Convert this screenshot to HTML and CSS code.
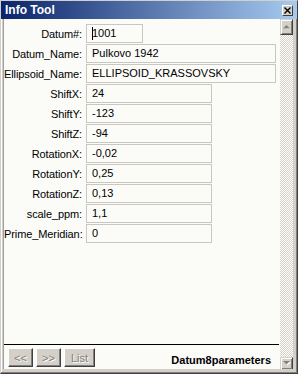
FILE: index.html
```html
<!DOCTYPE html>
<html lang="en">
<head>
    <meta charset="UTF-8">
    <title>Info Tool</title>
    <link rel="stylesheet" href="styles.css">
</head>
<body>
<div class="window">
    <div class="titlebar">
        <span class="title">Info Tool</span>
        <span class="close">
            <svg width="7" height="7" viewBox="0 0 7 7"><path d="M0.5 0.5l6 6M6.5 0.5l-6 6" stroke="#000" stroke-width="1.4"/></svg>
        </span>
    </div>
    <div class="client">
        <div class="panel">
            <div class="fields">
                <div class="row"><span class="label">Datum#:</span><div class="box w-s"><span class="caret"></span>1001</div></div>
                <div class="row"><span class="label">Datum_Name:</span><div class="box w-l">Pulkovo 1942</div></div>
                <div class="row"><span class="label">Ellipsoid_Name:</span><div class="box w-l">ELLIPSOID_KRASSOVSKY</div></div>
                <div class="row"><span class="label">ShiftX:</span><div class="box w-m">24</div></div>
                <div class="row"><span class="label">ShiftY:</span><div class="box w-m">-123</div></div>
                <div class="row"><span class="label">ShiftZ:</span><div class="box w-m">-94</div></div>
                <div class="row"><span class="label">RotationX:</span><div class="box w-m">-0,02</div></div>
                <div class="row"><span class="label">RotationY:</span><div class="box w-m">0,25</div></div>
                <div class="row"><span class="label">RotationZ:</span><div class="box w-m">0,13</div></div>
                <div class="row"><span class="label">scale_ppm:</span><div class="box w-m">1,1</div></div>
                <div class="row"><span class="label">Prime_Meridian:</span><div class="box w-m">0</div></div>
            </div>
            <div class="footer">
                <div class="nav">
                    <button class="btn" disabled>&lt;&lt;</button>
                    <button class="btn" disabled>&gt;&gt;</button>
                    <button class="btn list" disabled>List</button>
                </div>
                <span class="setname">Datum8parameters</span>
            </div>
        </div>
        <div class="scrollbar">
            <div class="sbtn up">
                <svg width="8" height="5" viewBox="0 0 8 5"><path d="M4 1l3 3H1z" fill="#fff"/><path d="M3.5 0L7 3.5H0z" fill="#808080"/></svg>
            </div>
            <div class="track"></div>
            <div class="sbtn down">
                <svg width="8" height="5" viewBox="0 0 8 5"><path d="M1 1h7L4.5 4.5z" fill="#fff"/><path d="M0 0h7L3.5 3.5z" fill="#808080"/></svg>
            </div>
        </div>
    </div>
</div>
</body>
</html>
```

FILE: styles.css
```css
*{
    margin:0;
    padding:0;
    box-sizing: border-box;
}
body{
    background: #d4d0c8;
    font-family: "Liberation Sans", Arial, sans-serif;
    font-size: 11px;
}
.window{
    width: 298px;
    height: 374px;
    background: #d4d0c8;
    border: 1px solid;
    border-color: #d4d0c8 #404040 #404040 #d4d0c8;
    box-shadow: inset -1px -1px #808080, inset 1px 1px #fff;
    display: flex;
    flex-direction: column;
}
.titlebar{
    height: 18px;
    background: linear-gradient(to right, #0a246a, #a6caf0);
    display: flex;
    align-items: center;
    justify-content: space-between;
    padding: 0 4px 0 4px;
}
.title{
    color: #fff;
    font-weight: bold;
    font-size: 12px;
}
.close{
    width: 11px;
    height: 11px;
    background: #d4d0c8;
    border: 1px solid;
    border-color: #fff #404040 #404040 #fff;
    display: flex;
    align-items: center;
    justify-content: center;
}
.client{
    flex: 1;
    display: flex;
    margin: 0 4px 4px 2px;
    border-left: 1px solid #a0a0a0;
    min-height: 0;
}
.panel{
    flex: 1;
    background: #fbfbf8;
    display: flex;
    flex-direction: column;
}
.fields{
    padding-top: 5px;
}
.row{
    display: flex;
    align-items: center;
    height: 19px;
    margin-bottom: 1px;
}
.label{
    width: 78px;
    text-align: right;
    margin-right: 4px;
    color: #000;
    white-space: nowrap;
    letter-spacing: -0.1px;
}
.box{
    height: 19px;
    border: 1px solid #c9c7c0;
    padding-left: 5px;
    line-height: 17px;
    color: #000;
    white-space: nowrap;
    overflow: hidden;
    display: flex;
    align-items: center;
}
.w-s{
    width: 57px;
}
.w-m{
    width: 126px;
}
.w-l{
    width: 190px;
}
.caret{
    width: 1px;
    height: 13px;
    background: #000;
    margin-right: -1px;
}
.footer{
    margin-top: auto;
    margin-right: 1px;
    border-top: 1px solid #000;
    height: 25px;
    padding: 3px 8px 2px 4px;
    display: flex;
    align-items: flex-end;
    justify-content: space-between;
}
.nav{
    display: flex;
    gap: 3px;
}
.btn{
    width: 25px;
    height: 19px;
    background: #d4d0c8;
    border: 1px solid;
    border-color: #fff #404040 #404040 #fff;
    box-shadow: inset -1px -1px #808080;
    font-family: "Liberation Sans", Arial, sans-serif;
    font-size: 11px;
    color: #808080;
    text-shadow: 1px 1px #fff;
}
.btn.list{
    width: 31px;
}
.setname{
    font-weight: bold;
    font-size: 11px;
    color: #000;
    padding-bottom: 1px;
}
.scrollbar{
    width: 13px;
    display: flex;
    flex-direction: column;
}
.sbtn{
    height: 16px;
    background: #d4d0c8;
    border: 1px solid;
    border-color: #d4d0c8 #404040 #404040 #d4d0c8;
    box-shadow: inset 1px 1px #fff, inset -1px -1px #808080;
    display: flex;
    align-items: center;
    justify-content: center;
}
.sbtn.down{
    height: 12px;
    border-bottom: none;
    align-items: flex-start;
    padding-top: 3px;
}
.track{
    flex: 1;
    background-image: conic-gradient(#fff 25%, #d4d0c8 0 50%, #fff 0 75%, #d4d0c8 0);
    background-size: 2px 2px;
}
```
